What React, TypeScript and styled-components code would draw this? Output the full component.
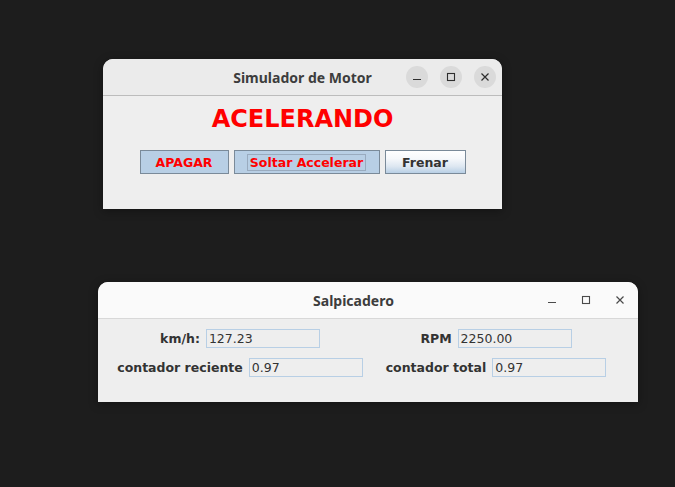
import styled, { createGlobalStyle } from "styled-components";

const GlobalStyle = createGlobalStyle`
    html, body {
        margin:0;
        padding:0;
        background:#1d1d1d;
    }
`;

const Desktop = styled.div`
    position:relative;
    width:675px;
    height:487px;
    background:#1d1d1d;
    overflow:hidden;
    font-family:"DejaVu Sans", sans-serif;
`;

// windows sit on the desktop at their own coordinates
const Frame = styled.div<{ $left: number; $top: number; $width: number }>`
    position:absolute;
    left:${(p) => p.$left}px;
    top:${(p) => p.$top}px;
    width:${(p) => p.$width}px;
    display:flex;
    flex-direction:column;
    border-radius:10px 10px 0 0;
    overflow:hidden;
    background:#eeeeee;
    box-shadow:0 2px 10px rgba(0,0,0,0.35);
`;

const TitleBar = styled.div<{ $light?: boolean }>`
    height:36px;
    flex-shrink:0;
    display:flex;
    align-items:center;
    background:${(p) => (p.$light ? "#fafafa" : "#ebebeb")};
    border-bottom:1px solid ${(p) => (p.$light ? "#d8d8d8" : "#bcbcbc")};
`;

const Title = styled.div<{ $padLeft: number }>`
    flex:1;
    padding-left:${(p) => p.$padLeft}px;
    text-align:center;
    font-family:"Noto Sans", "DejaVu Sans", sans-serif;
    font-weight:700;
    font-size:14px;
    color:#3d3d3d;
`;

const Controls = styled.div<{ $gap: number; $padRight: number }>`
    display:flex;
    align-items:center;
    gap:${(p) => p.$gap}px;
    padding-right:${(p) => p.$padRight}px;
`;

const CtrlButton = styled.div<{ $round?: boolean }>`
    width:${(p) => (p.$round ? 22 : 34)}px;
    height:22px;
    border-radius:50%;
    background:${(p) => (p.$round ? "#dadada" : "transparent")};
    display:flex;
    align-items:center;
    justify-content:center;
    color:${(p) => (p.$round ? "#2e2e2e" : "#4a4a4a")};
`;

const StatusBody = styled.div`
    height:113px;
    display:flex;
    flex-direction:column;
    align-items:center;
    padding-top:9px;
    box-sizing:border-box;
`;

const Status = styled.div`
    font-size:24px;
    line-height:28px;
    font-weight:700;
    color:#ff0000;
`;

const ButtonRow = styled.div`
    display:flex;
    gap:5px;
    margin-top:17px;
`;

const MetalButton = styled.div<{ $w: number; $plain?: boolean }>`
    width:${(p) => p.$w}px;
    height:24px;
    box-sizing:border-box;
    border:1px solid #7a8a99;
    display:flex;
    align-items:center;
    justify-content:center;
    font-size:12.5px;
    font-weight:700;
    color:${(p) => (p.$plain ? "#333333" : "#ff0000")};
    background:${(p) =>
        p.$plain
            ? "linear-gradient(#ffffff 0%, #f6f8fb 35%, #dde7f1 70%, #b8cfe5 100%)"
            : "#b8cfe5"};
`;

const FocusRing = styled.span`
    border:1px solid #99abbf;
    padding:0 2px;
    height:17px;
    box-sizing:border-box;
    display:flex;
    align-items:center;
`;

const DashBody = styled.div`
    display:grid;
    grid-template-columns:1fr 1fr;
    row-gap:10px;
    padding:10px 14px 25px;
`;

const Cell = styled.div`
    display:flex;
    align-items:center;
    justify-content:center;
    gap:6px;
`;

const Label = styled.span`
    font-size:12.5px;
    font-weight:700;
    color:#333333;
`;

const Field = styled.div`
    width:114px;
    height:19px;
    box-sizing:border-box;
    border:1px solid #b8cfe5;
    background:#eeeeee;
    padding-left:2px;
    display:flex;
    align-items:center;
    font-size:12.5px;
    color:#333333;
`;

function MinIcon() {
    return (
        <svg width="10" height="10" viewBox="0 0 10 10">
            <line x1="1" y1="7.5" x2="9" y2="7.5" stroke="currentColor" strokeWidth="1.2" />
        </svg>
    );
}

function MaxIcon() {
    return (
        <svg width="10" height="10" viewBox="0 0 10 10">
            <rect x="1.5" y="1.5" width="7" height="7" fill="none" stroke="currentColor" strokeWidth="1.1" />
        </svg>
    );
}

function CloseIcon() {
    return (
        <svg width="10" height="10" viewBox="0 0 10 10">
            <path d="M1.5 1.5 L8.5 8.5 M8.5 1.5 L1.5 8.5" stroke="currentColor" strokeWidth="1.2" />
        </svg>
    );
}

function App() {
    return (
        <Desktop>
            <GlobalStyle />
            <Frame $left={103} $top={59} $width={399}>
                <TitleBar>
                    <Title $padLeft={96}>Simulador de Motor</Title>
                    <Controls $gap={12} $padRight={6}>
                        <CtrlButton $round><MinIcon /></CtrlButton>
                        <CtrlButton $round><MaxIcon /></CtrlButton>
                        <CtrlButton $round><CloseIcon /></CtrlButton>
                    </Controls>
                </TitleBar>
                <StatusBody>
                    <Status>ACELERANDO</Status>
                    <ButtonRow>
                        <MetalButton $w={89}>APAGAR</MetalButton>
                        <MetalButton $w={146}>
                            <FocusRing>Soltar Accelerar</FocusRing>
                        </MetalButton>
                        <MetalButton $w={81} $plain>Frenar</MetalButton>
                    </ButtonRow>
                </StatusBody>
            </Frame>

            <Frame $left={98} $top={282} $width={540}>
                <TitleBar $light>
                    <Title $padLeft={74}>Salpicadero</Title>
                    <Controls $gap={0} $padRight={1}>
                        <CtrlButton><MinIcon /></CtrlButton>
                        <CtrlButton><MaxIcon /></CtrlButton>
                        <CtrlButton><CloseIcon /></CtrlButton>
                    </Controls>
                </TitleBar>
                <DashBody>
                    <Cell>
                        <Label>km/h:</Label>
                        <Field>127.23</Field>
                    </Cell>
                    <Cell>
                        <Label>RPM</Label>
                        <Field>2250.00</Field>
                    </Cell>
                    <Cell>
                        <Label>contador reciente</Label>
                        <Field>0.97</Field>
                    </Cell>
                    <Cell>
                        <Label>contador total</Label>
                        <Field>0.97</Field>
                    </Cell>
                </DashBody>
            </Frame>
        </Desktop>
    );
}

export default App;
